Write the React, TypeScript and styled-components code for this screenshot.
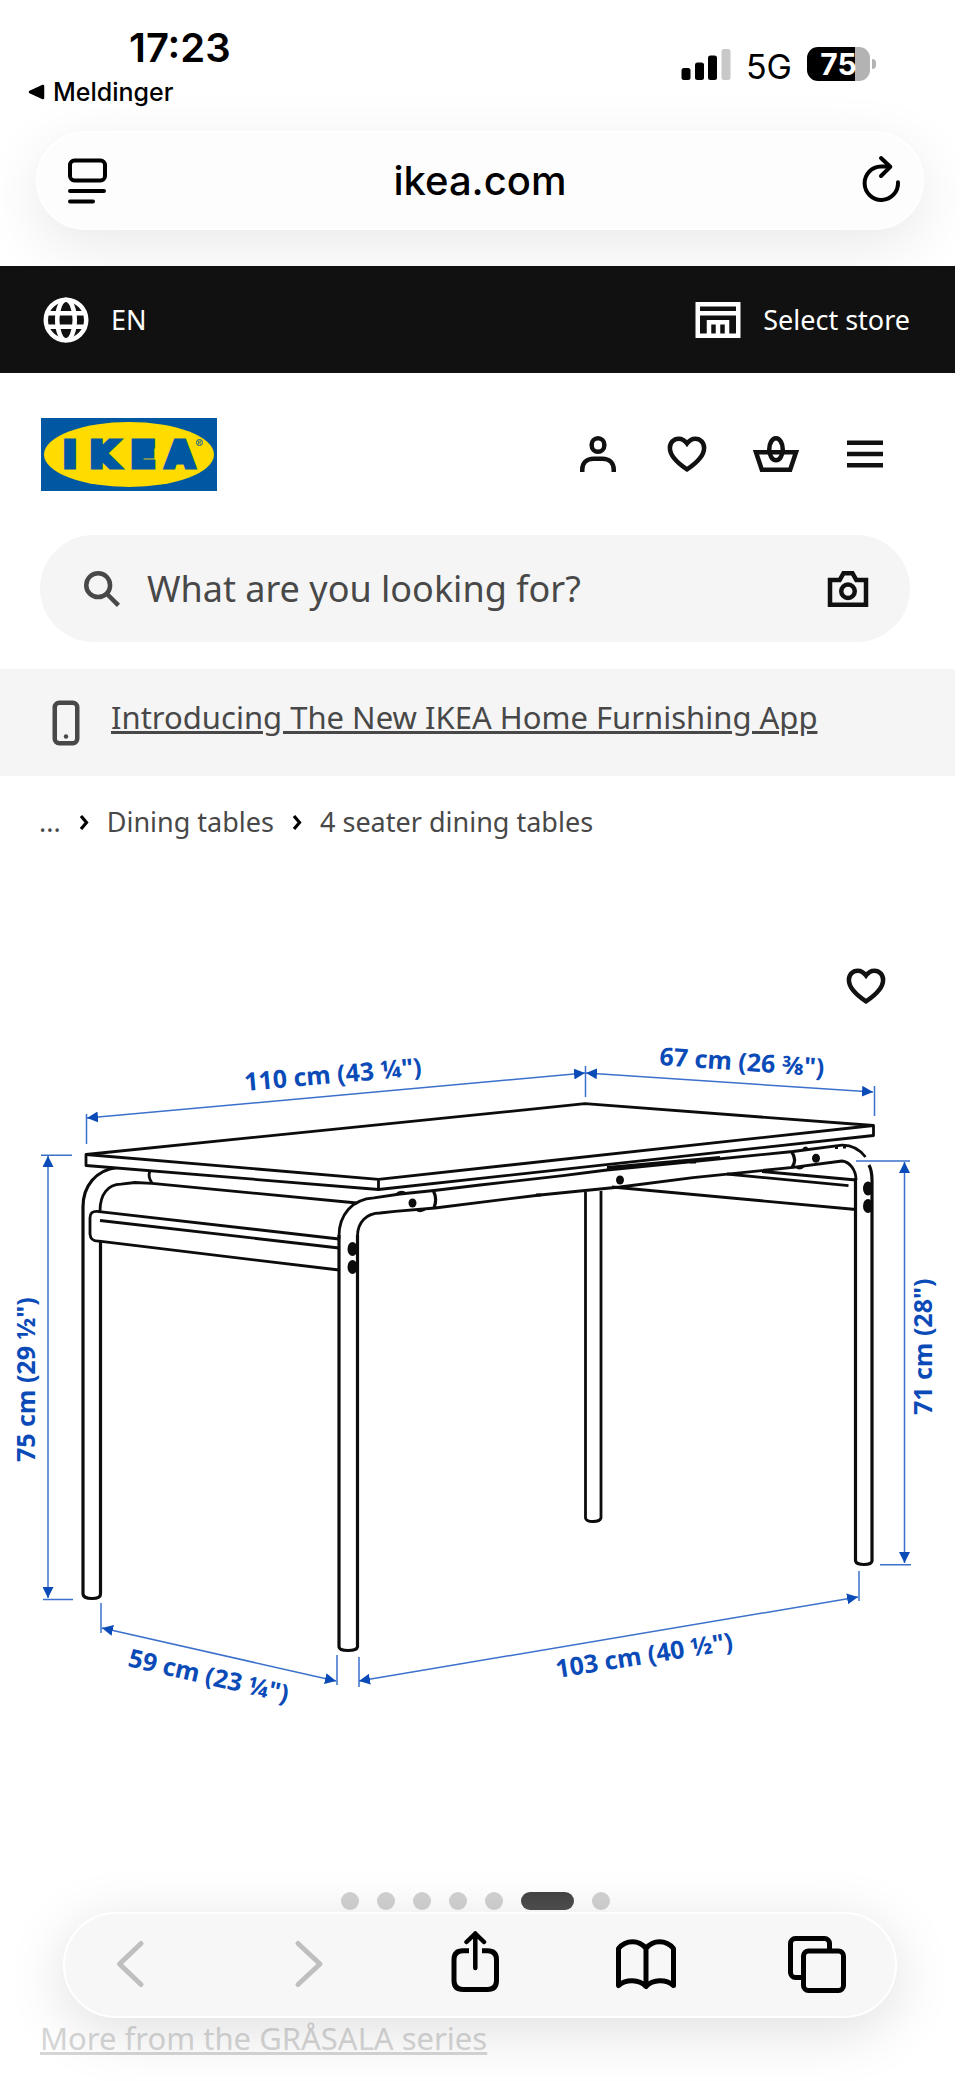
import React from "react";
import styled, { createGlobalStyle } from "styled-components";

const GlobalStyle = createGlobalStyle`
  *, *::before, *::after { box-sizing: border-box; }
  body { margin: 0; background: #fff; color: #111; }
  button, input { font: inherit; color: inherit; }
  button { border: 0; padding: 0; background: none; cursor: pointer; }
`;

const chromeFont = `Inter, "Liberation Sans", sans-serif`;
const siteFont = `"Noto Sans", "Open Sans", sans-serif`;

/* Phone status bar and browser chrome */

const StatusBar = styled.div`
  display: flex;
  justify-content: space-between;
  align-items: flex-start;
  height: 131px;
  padding: 24px 84px 0 28px;
  font-family: ${chromeFont};
  color: #000;
`;

const ClockColumn = styled.div`
  display: flex;
  flex-direction: column;
  gap: 4px;
`;

const Clock = styled.time`
  padding-left: 101px;
  font-size: 40px;
  font-weight: 600;
  line-height: 48px;
`;

const BackToApp = styled.a`
  display: flex;
  align-items: center;
  gap: 8px;
  font-size: 25px;
  font-weight: 500;
  line-height: 32px;
  color: inherit;
  text-decoration: none;
`;

const StatusIcons = styled.div`
  display: flex;
  align-items: flex-start;
  gap: 15px;
  padding-top: 23px;
`;

const Network = styled.span`
  font-size: 34px;
  line-height: 40px;
`;

const Battery = styled.div`
  display: flex;
  align-items: center;
  gap: 2px;
`;

const BatteryBody = styled.span<{ $level: number }>`
  width: 63px;
  height: 34px;
  border-radius: 11px;
  background: linear-gradient(
    90deg,
    #000 ${(p) => p.$level}%,
    #b3b3b3 ${(p) => p.$level}%
  );
  color: #fff;
  font-size: 30px;
  font-weight: 700;
  line-height: 34px;
  text-align: center;
`;

const BatteryCap = styled.span`
  width: 4px;
  height: 10px;
  border-radius: 0 5px 5px 0;
  background: #b3b3b3;
`;

const AddressBar = styled.div`
  display: grid;
  grid-template-columns: 56px 1fr 56px;
  align-items: center;
  height: 99px;
  margin: 0 36px 36px;
  padding: 0 17px;
  border: 2px solid #fff;
  border-radius: 50px;
  background: #fdfdfd;
  box-shadow: 0 16px 60px rgba(0, 0, 0, 0.09);
  font-family: ${chromeFont};
`;

const ChromeButton = styled.button`
  display: grid;
  place-items: center;
  height: 56px;
`;

const Address = styled.button`
  font-size: 40px;
  font-weight: 500;
  line-height: 56px;
  color: #000;
`;

const Toolbar = styled.nav`
  position: fixed;
  left: 63px;
  right: 63px;
  bottom: 63px;
  display: flex;
  justify-content: space-between;
  align-items: center;
  height: 106px;
  padding: 0 44px 0 31px;
  border: 2px solid #fff;
  border-radius: 53px;
  background: #f7f7f7;
  box-shadow: 0 12px 60px rgba(0, 0, 0, 0.13);
`;

const ToolbarButton = styled.button`
  width: 68px;
  height: 68px;
  color: #000;

  &:disabled {
    color: #bfbfbf;
  }
`;

/* Web page */

const Site = styled.div`
  position: relative;
  margin-right: 5px;
  font-family: ${siteFont};
`;

const UtilityBar = styled.div`
  display: flex;
  justify-content: space-between;
  align-items: center;
  height: 107px;
  padding: 0 45px 0 39px;
  background: #111;
  color: #fff;
`;

const UtilityButton = styled.button`
  display: flex;
  align-items: center;
  gap: 18px;
  font-size: 27px;
  line-height: 38px;
`;

const Header = styled.header`
  display: flex;
  justify-content: space-between;
  align-items: center;
  height: 162px;
  padding: 0 46px 0 41px;
`;

const LogoLink = styled.a`
  display: block;
  width: 176px;
  height: 73px;
`;

const HeaderActions = styled.nav`
  display: flex;
`;

const IconButton = styled.button`
  display: grid;
  place-items: center;
  width: 89px;
  height: 89px;
`;

const SearchForm = styled.form`
  display: flex;
  align-items: center;
  height: 107px;
  margin: 0 45px 27px 40px;
  padding: 0 18px 0 35px;
  border-radius: 54px;
  background: #f5f5f5;
  color: #484848;
`;

const SearchInput = styled.input`
  flex: 1;
  min-width: 0;
  padding: 0 0 0 18px;
  border: 0;
  outline: 0;
  background: none;
  font-size: 36px;
  line-height: 54px;

  &::placeholder {
    color: #484848;
    opacity: 1;
  }
`;

const CameraButton = styled(IconButton)`
  color: #111;
`;

const AppBanner = styled.div`
  display: flex;
  align-items: center;
  gap: 18px;
  height: 107px;
  padding: 0 39px;
  background: #f5f5f5;
  color: #484848;
`;

const BannerLink = styled.a`
  padding-bottom: 11px;
  font-size: 31px;
  line-height: 42px;
  color: inherit;
`;

const Breadcrumb = styled.ol`
  display: flex;
  align-items: center;
  gap: 18px;
  margin: 0;
  padding: 27px 39px 100px;
  list-style: none;
  font-size: 27px;
  line-height: 38px;
`;

const Crumb = styled.li`
  display: flex;
  align-items: center;
  gap: 18px;
`;

const CrumbLink = styled.a`
  color: #484848;
  text-decoration: none;
`;

const GalleryActions = styled.div`
  display: flex;
  justify-content: flex-end;
  padding-right: 45px;
`;

const Drawing = styled.svg`
  display: block;
  width: 100%;
  height: auto;
`;

const DimensionText = styled.text`
  fill: #0b4bb8;
  font-family: ${siteFont};
  font-size: 25px;
  font-weight: 700;
`;

const Dots = styled.div`
  display: flex;
  justify-content: center;
  gap: 18px;
  padding: 162px 5px 107px 0;
`;

const Dot = styled.button<{ $active: boolean }>`
  width: ${(p) => (p.$active ? "53px" : "18px")};
  height: 18px;
  border-radius: 9px;
  background: ${(p) =>
    p.$active ? "linear-gradient(#444, #505050)" : "#d2d2d2"};
`;

const SeriesLink = styled.a`
  display: block;
  width: fit-content;
  margin-left: 40px;
  padding-bottom: 21px;
  font-size: 31px;
  line-height: 42px;
  color: #d6d6d6;
`;

/* Icons on a 24 unit grid */

const IconSvg = styled.svg`
  display: block;
  width: 54px;
  height: 54px;
  fill: none;
  stroke: currentColor;
  stroke-width: 2;
`;

const Icon = ({ children }: { children: React.ReactNode }) => (
  <IconSvg viewBox="0 0 24 24" aria-hidden="true">
    {children}
  </IconSvg>
);

const HeartIcon = () => (
  <Icon>
    <path d="M12 7.3C10.9 5.8 9.7 5.2 8.3 5.2C6 5.2 4.4 7 4.4 9.3C4.4 13 7.8 16 12 18.8C16.2 16 19.6 13 19.6 9.3C19.6 7 18 5.2 15.7 5.2C14.3 5.2 13.1 5.8 12 7.3Z" />
  </Icon>
);

const ToolGlyph = styled.svg`
  display: block;
  width: 68px;
  height: 68px;
  fill: none;
  stroke: currentColor;
  stroke-width: 5;
  stroke-linecap: round;
  stroke-linejoin: round;
`;

const ChromeGlyph = styled.svg`
  width: 56px;
  height: 56px;
  fill: none;
  stroke: #000;
  stroke-width: 4;
  stroke-linecap: round;
  stroke-linejoin: round;
`;

const CrumbArrow = () => (
  <svg width="10" height="18" viewBox="0 0 10 18" aria-hidden="true">
    <path d="M2 3L7.500 9.500L2 16" fill="none" stroke="#000" strokeWidth="3.200" />
  </svg>
);

const IkeaLogo = () => (
  <svg width="176" height="73" viewBox="0 0 176 73" role="img" aria-label="IKEA">
    <rect width="176" height="73" fill="#0058a3" />
    <ellipse cx="88" cy="36.500" rx="85" ry="32.500" fill="#ffdb00" />
    <text
      y="49"
      textAnchor="middle"
      fontFamily="DejaVu Sans, sans-serif"
      fontSize="36"
      fontWeight="700"
      fill="#0058a3"
      stroke="#0058a3"
      strokeWidth="5"
    >
      <tspan x="29">I</tspan>
      <tspan x="63">K</tspan>
      <tspan x="102">E</tspan>
      <tspan x="139">A</tspan>
    </text>
    <circle cx="158.500" cy="24.500" r="3" fill="none" stroke="#0058a3" />
    <path d="M157.500 26.500V23H159.500V24.700H157.500M158.500 24.700L159.700 26.500" fill="none" stroke="#0058a3" strokeWidth="0.6" />
  </svg>
);

/* Dimension arrows of the product drawing */

type Arrow = { x1: number; y1: number; x2: number; y2: number };

const arrows: Arrow[] = [
  { x1: 87, y1: 1118, x2: 585, y2: 1073 },
  { x1: 586, y1: 1073, x2: 873, y2: 1092 },
  { x1: 48, y1: 1156, x2: 48, y2: 1598 },
  { x1: 904.5, y1: 1162, x2: 904.5, y2: 1563 },
  { x1: 102, y1: 1628, x2: 336, y2: 1681 },
  { x1: 359, y1: 1681, x2: 858, y2: 1597 },
];

const labels = [
  { text: '110 cm (43 ¼")', x: 245, y: 1091, angle: -5 },
  { text: '67 cm (26 ⅜")', x: 659, y: 1065, angle: 4 },
  { text: '75 cm (29 ½")', x: 35, y: 1462, angle: -90 },
  { text: '71 cm (28")', x: 932, y: 1415, angle: -90 },
  { text: '59 cm (23 ¼")', x: 127, y: 1666, angle: 13 },
  { text: '103 cm (40 ½")', x: 557, y: 1678, angle: -9 },
];

const TableDrawing = () => (
  <Drawing
    viewBox="0 1030 955 700"
    role="img"
    aria-label="Dining table with its measurements"
  >
    <defs>
      <marker
        id="arrowhead"
        viewBox="0 0 10 10"
        refX="10"
        refY="5"
        markerWidth="11"
        markerHeight="11"
        markerUnits="userSpaceOnUse"
        orient="auto-start-reverse"
      >
        <path d="M0 0L10 5L0 10Z" fill="#0b4bb8" />
      </marker>
    </defs>

    <g fill="none" stroke="#0c0c0c" strokeWidth="2.8" strokeLinejoin="round">
      {/* back leg */}
      <path d="M585.5 1192V1518Q586 1521.500 593 1521.500T601 1518V1191" />
      {/* rear cross bar on the right */}
      <path d="M762 1171.500L856 1180M727 1174L848.500 1185.700M612 1187L856 1209.500" />
      {/* left leg and short rail */}
      <path d="M117 1167.500C96 1170 83 1186 83 1207V1594Q83.500 1598.500 92 1598.500T100.500 1594V1242" strokeWidth="3.200" />
      <path d="M100 1211C100 1194 108 1184.500 121 1184.200L135 1182.500L152 1183.300L357 1203" />
      <path d="M150 1170.500Q147.500 1177 152 1183" />
      <path d="M339 1239L97 1211.300Q90 1211 90 1218V1234Q90.500 1241.500 99 1241.200L339 1270" />
      <path d="M100 1220.500L339 1248" />
      {/* long rail */}
      <path d="M339 1239V1236C339 1215 352 1199 374 1197.800L400 1194L434 1190.500L480 1185L563 1175.700L607 1170L693 1161.500L793 1151.500L842 1145.200C852 1145 860 1150 865.500 1157" />
      <path d="M357.500 1236C357.500 1222 367 1213 380 1213L395 1211.300L435 1208L480 1202.300L540 1195L620 1187L693 1177.700L793 1167.300L842 1161C850 1162 856 1170 856 1180" />
      <path d="M433.500 1191Q437.500 1199 434 1208M791.500 1151.500Q797.500 1160 792 1167.500" strokeWidth="3.200" />
      <path d="M607 1167.500L720 1157.500M607 1169L680 1161" strokeWidth="3.200" />
      {/* front leg */}
      <path d="M339 1235V1647Q339.500 1650.500 348 1650.500T357.500 1647V1235" strokeWidth="3.200" />
      {/* right leg */}
      <path d="M869 1165Q872 1171 872 1180V1561Q871.500 1564.500 864 1564.500T855.500 1561V1178" strokeWidth="3.200" />
      {/* table top */}
      <path d="M86 1154.500L585 1103.700L873.500 1125.500V1135.500L378.500 1189.500L86 1165.500Z" fill="#fff" />
      <path d="M86 1154.500L378.500 1179.300L873.500 1125.500M378.500 1179.300V1189.500" />
    </g>

    {/* bolts */}
    <g fill="#0c0c0c">
      <ellipse cx="412.500" cy="1203" rx="4" ry="4.500" />
      <ellipse cx="620" cy="1180" rx="4" ry="4.500" />
      <ellipse cx="816" cy="1158.300" rx="4" ry="4.500" />
      <ellipse cx="352.500" cy="1249" rx="5" ry="7" />
      <ellipse cx="352.500" cy="1267" rx="5" ry="7" />
      <ellipse cx="868" cy="1188.500" rx="5" ry="7" />
      <ellipse cx="868" cy="1206" rx="5" ry="7" />
      <path d="M395 1194Q401 1188 407 1193ZM415 1210Q421 1215 427 1209ZM802 1149.500Q805 1144 809 1149ZM795 1167.500Q800 1172 805 1166.500Z" />
      <path d="M835 1145h3v4h-3ZM843 1144.500h3v4h-3ZM536 1193.500h5v3h-5ZM690 1160.500h6v3h-6Z" />
    </g>

    <g stroke="#3b70cc" strokeWidth="1.500">
      <path d="M86.500 1114V1144M585.500 1066V1097M874.500 1086V1116M41 1155.300H72M43 1599.500H73M856 1161H910M880 1564.700H911M101 1603V1633M337 1655V1685M359 1657V1687M859 1571V1601" />
      {arrows.map((a) => (
        <line
          key={`${a.x1}-${a.y1}`}
          {...a}
          markerStart="url(#arrowhead)"
          markerEnd="url(#arrowhead)"
        />
      ))}
    </g>

    {labels.map((l) => (
      <DimensionText
        key={l.text}
        x={l.x}
        y={l.y}
        transform={`rotate(${l.angle} ${l.x} ${l.y})`}
      >
        {l.text}
      </DimensionText>
    ))}
  </Drawing>
);

const slides = [0, 1, 2, 3, 4, 5, 6];

export default function App() {
  return (
    <>
      <GlobalStyle />
      <StatusBar>
        <ClockColumn>
          <Clock>17:23</Clock>
          <BackToApp href="#messages">
            <svg width="17" height="16" viewBox="0 0 17 16" aria-hidden="true">
              <path d="M2 8L15 2V14Z" stroke="#000" strokeWidth="2.500" strokeLinejoin="round" />
            </svg>
            Meldinger
          </BackToApp>
        </ClockColumn>
        <StatusIcons>
          <svg width="50" height="34" viewBox="0 0 50 34" aria-hidden="true">
            <rect x="0.500" y="21" width="9" height="12" rx="2.500" />
            <rect x="14" y="15.500" width="9" height="17.500" rx="2.500" />
            <rect x="27" y="8.500" width="9" height="24.500" rx="2.500" />
            <rect x="40.500" y="2" width="9" height="31" rx="2.500" fill="#c8c8c8" />
          </svg>
          <Network>5G</Network>
          <Battery>
            <BatteryBody $level={76}>75</BatteryBody>
            <BatteryCap />
          </Battery>
        </StatusIcons>
      </StatusBar>

      <AddressBar>
        <ChromeButton type="button" aria-label="Page menu">
          <ChromeGlyph viewBox="0 0 56 56">
            <rect x="15" y="7.500" width="35" height="20" rx="4.500" />
            <path d="M15 38H49M15 48.500H38" />
          </ChromeGlyph>
        </ChromeButton>
        <Address type="button">ikea.com</Address>
        <ChromeButton type="button" aria-label="Reload">
          <ChromeGlyph viewBox="0 0 56 56">
            <path d="M49 29.300A16.700 16.700 0 1 1 32 13.500H40" />
            <path d="M32 5L41.300 13.800L32 23" />
          </ChromeGlyph>
        </ChromeButton>
      </AddressBar>

      <Site>
        <UtilityBar>
          <UtilityButton type="button">
            <Icon>
              <circle cx="12" cy="12" r="9" />
              <ellipse cx="12" cy="12" rx="3.900" ry="9" />
              <path d="M4 9H20M4 15H20" />
            </Icon>
            EN
          </UtilityButton>
          <UtilityButton type="button">
            <Icon>
              <path d="M3 5H21V19H3ZM3 9H21M8 19V13H16V19M12 13V19" />
            </Icon>
            Select store
          </UtilityButton>
        </UtilityBar>

        <Header>
          <LogoLink href="#home">
            <IkeaLogo />
          </LogoLink>
          <HeaderActions>
            <IconButton type="button" aria-label="Profile">
              <Icon>
                <rect x="9.200" y="5" width="5.600" height="6" rx="2.800" />
                <path d="M5 20V19C5 16 7 14.100 10 14.100H14C17 14.100 19 16 19 19V20" />
              </Icon>
            </IconButton>
            <IconButton type="button" aria-label="Favourites">
              <HeartIcon />
            </IconButton>
            <IconButton type="button" aria-label="Shopping basket">
              <Icon>
                <ellipse cx="12" cy="9.900" rx="3" ry="4.900" />
                <path d="M3.100 11.200H20.900L18.300 19H5.700Z" />
              </Icon>
            </IconButton>
            <IconButton type="button" aria-label="Menu">
              <Icon>
                <path d="M4 7H20M4 12H20M4 17H20" />
              </Icon>
            </IconButton>
          </HeaderActions>
        </Header>

        <SearchForm role="search">
          <Icon>
            <circle cx="10.300" cy="10.300" r="5.300" />
            <path d="M14 14L19.300 19.300" />
          </Icon>
          <SearchInput
            type="text"
            aria-label="Search"
            placeholder="What are you looking for?"
          />
          <CameraButton type="button" aria-label="Search with an image">
            <Icon>
              <path d="M4 19V8H8.300L10 5H14L15.700 8H20V19Z" />
              <circle cx="12" cy="13" r="3" />
            </Icon>
          </CameraButton>
        </SearchForm>

        <AppBanner>
          <Icon>
            <rect x="7" y="3" width="10" height="18" rx="2" />
            <circle cx="12" cy="18" r="1" fill="currentColor" stroke="none" />
          </Icon>
          <BannerLink href="#app">
            Introducing The New IKEA Home Furnishing App
          </BannerLink>
        </AppBanner>

        <Breadcrumb>
          <Crumb>
            <CrumbLink href="#all">...</CrumbLink>
            <CrumbArrow />
          </Crumb>
          <Crumb>
            <CrumbLink href="#dining-tables">Dining tables</CrumbLink>
            <CrumbArrow />
          </Crumb>
          <Crumb>
            <CrumbLink href="#four-seater">4 seater dining tables</CrumbLink>
          </Crumb>
        </Breadcrumb>

        <GalleryActions>
          <IconButton type="button" aria-label="Add to favourites">
            <HeartIcon />
          </IconButton>
        </GalleryActions>
        <TableDrawing />
        <Dots>
          {slides.map((n) => (
            <Dot
              key={n}
              type="button"
              $active={n === 5}
              aria-label={`Picture ${n + 1}`}
            />
          ))}
        </Dots>
        <SeriesLink href="#series">More from the GRÅSALA series</SeriesLink>
      </Site>

      <Toolbar aria-label="Browser">
        <ToolbarButton type="button" aria-label="Back" disabled>
          <ToolGlyph viewBox="0 0 68 68">
            <path d="M45 12.500L23.500 33L45 53.500" />
          </ToolGlyph>
        </ToolbarButton>
        <ToolbarButton type="button" aria-label="Forward" disabled>
          <ToolGlyph viewBox="0 0 68 68">
            <path d="M30 12.500L52 33L30 53.500" />
          </ToolGlyph>
        </ToolbarButton>
        <ToolbarButton type="button" aria-label="Share">
          <ToolGlyph viewBox="0 0 68 68">
            <path
              d="M29 19.700H23Q14 19.700 14 28.700V49.500Q14 58.500 23 58.500H47.500Q56.500 58.500 56.500 49.500V28.700Q56.500 19.700 47.500 19.700H42"
              strokeLinecap="butt"
            />
            <path d="M35.300 37V2.500M26.500 11L35.300 2.500L44 11" strokeWidth="4.500" />
          </ToolGlyph>
        </ToolbarButton>
        <ToolbarButton type="button" aria-label="Bookmarks">
          <ToolGlyph viewBox="0 0 68 68">
            <path d="M7.500 17.500C15 8.500 28 8.500 35 17.500V55.500C28 48 15 48 7.500 54.500ZM35 17.500C42 8.500 55 8.500 62.500 17.500V54.500C55 48 42 48 35 55.500" />
          </ToolGlyph>
        </ToolbarButton>
        <ToolbarButton type="button" aria-label="Tabs">
          <ToolGlyph viewBox="0 0 68 68">
            <rect x="7.500" y="7.500" width="39" height="39" rx="5" />
            <rect x="20.500" y="20" width="40" height="39.500" rx="5" fill="#f7f7f7" />
          </ToolGlyph>
        </ToolbarButton>
      </Toolbar>
    </>
  );
}
